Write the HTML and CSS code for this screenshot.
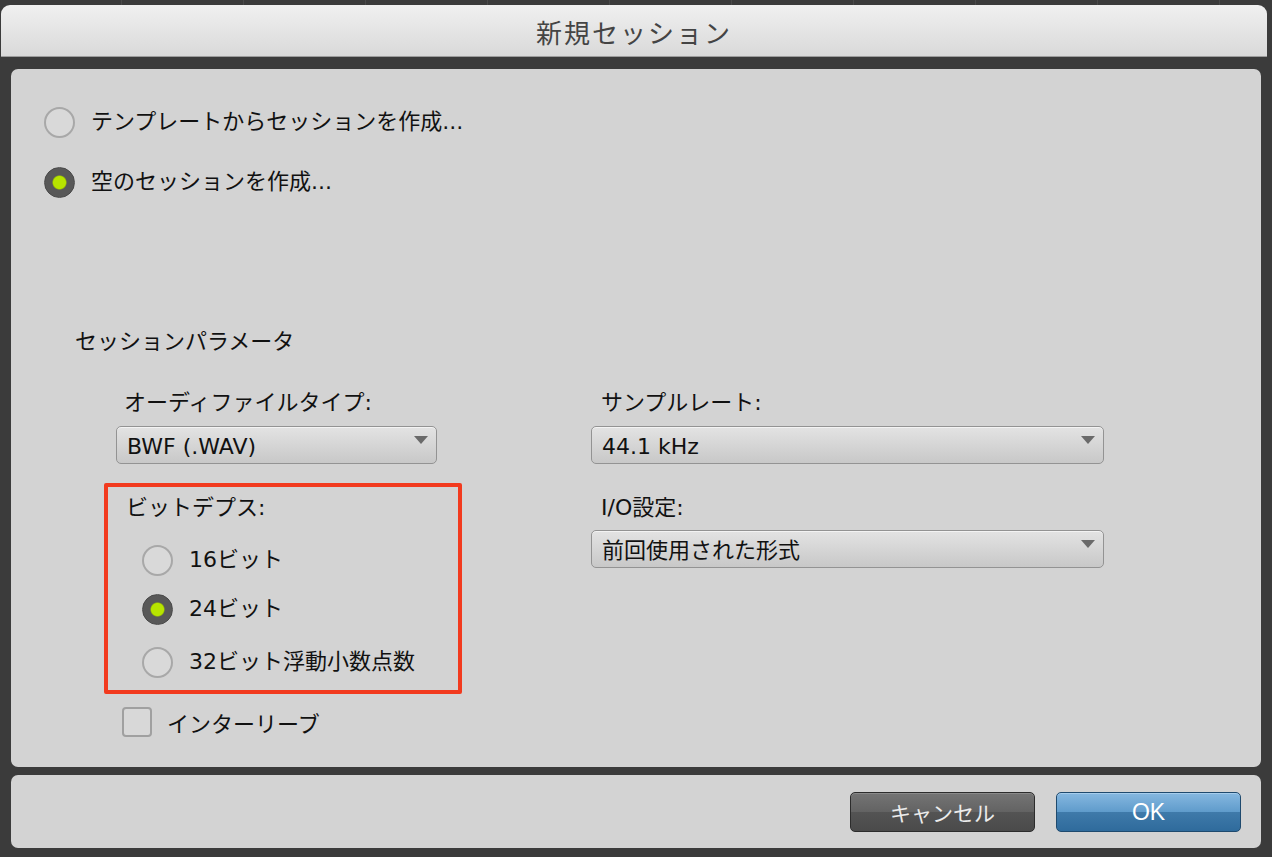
FILE: index.html
```html
<!DOCTYPE html>
<html lang="ja">
<head>
    <meta charset="UTF-8">
    <meta name="viewport" content="width=device-width, initial-scale=1.0">
    <title>新規セッション</title>
    <link rel="stylesheet" href="styles.css">
</head>
<body>

    <div class="top-strip"></div>

    <div class="window">
        <div class="titlebar">新規セッション</div>

        <div class="content">
            <div class="panel main">
                <div class="option">
                    <span class="radio"></span>
                    <span>テンプレートからセッションを作成...</span>
                </div>
                <div class="option second">
                    <span class="radio checked"></span>
                    <span>空のセッションを作成...</span>
                </div>

                <div class="section-title">セッションパラメータ</div>

                <div class="params">
                    <div class="col-left">
                        <div class="label">オーディファイルタイプ:</div>
                        <div class="select">BWF (.WAV)</div>

                        <div class="bit-depth">
                            <div class="label">ビットデプス:</div>
                            <div class="option small">
                                <span class="radio"></span>
                                <span>16ビット</span>
                            </div>
                            <div class="option small">
                                <span class="radio checked"></span>
                                <span>24ビット</span>
                            </div>
                            <div class="option small">
                                <span class="radio"></span>
                                <span>32ビット浮動小数点数</span>
                            </div>
                        </div>

                        <div class="check-row">
                            <span class="checkbox"></span>
                            <span>インターリーブ</span>
                        </div>
                    </div>

                    <div class="col-right">
                        <div class="label">サンプルレート:</div>
                        <div class="select">44.1 kHz</div>
                        <div class="label io">I/O設定:</div>
                        <div class="select">前回使用された形式</div>
                    </div>
                </div>
            </div>

            <div class="panel footer">
                <button class="btn cancel">キャンセル</button>
                <button class="btn ok">OK</button>
            </div>
        </div>
    </div>

</body>
</html>
```

FILE: styles.css
```css
* {
    margin: 0;
    padding: 0;
    box-sizing: border-box;
}

body {
    font-family: 'DejaVu Sans', 'Noto Sans CJK JP', sans-serif;
    font-size: 22px;
    color: #111;
    background-color: #3b3b3b;
    width: 1272px;
    height: 857px;
    overflow: hidden;
}

.top-strip {
    height: 5px;
    background: repeating-linear-gradient(90deg, #3b3b3b 0 121px, #4a4a4a 121px 122px);
}

.titlebar {
    height: 52px;
    margin: 0 5px 0 1px;
    border-radius: 9px 9px 0 0;
    background: linear-gradient(#f0f0f0, #d9d9d9);
    border-bottom: 1px solid #9c9c9c;
    text-align: center;
    line-height: 54px;
    font-family: 'Noto Sans CJK JP', sans-serif;
    font-size: 26px;
    letter-spacing: 2px;
    color: #444;
}

.content {
    padding: 12px 11px 9px 11px;
    display: flex;
    flex-direction: column;
    gap: 8px;
}

.panel {
    background-color: #d3d3d3;
    border-radius: 7px;
}

.main {
    height: 698px;
    padding: 37px 0 0 33px;
}

.option {
    display: flex;
    align-items: center;
    height: 32px;
    gap: 16px;
    line-height: 32px;
}

.option.second {
    margin-top: 28px;
}

.radio {
    width: 31px;
    height: 31px;
    border-radius: 50%;
    border: 2px solid #a8a8a8;
    background-color: #d9d9d9;
    flex-shrink: 0;
}

.radio.checked {
    border: 1px solid #4a4a4a;
    background: radial-gradient(circle, #b7e400 0 6px, #a0c800 6.5px, #585858 7.5px);
}

.section-title {
    margin: 126px 0 0 31px;
    line-height: 36px;
}

.params {
    display: flex;
    gap: 129px;
    margin: 25px 0 0 60px;
}

.col-left {
    width: 358px;
}

.col-right {
    width: 513px;
}

.label {
    line-height: 36px;
    padding-left: 20px;
}

.col-right .label {
    padding-left: 10px;
}

.label.io {
    margin-top: 26px;
}

.select {
    position: relative;
    height: 38px;
    margin-top: 5px;
    padding: 2px 0 0 10px;
    line-height: 36px;
    border: 1px solid #939393;
    border-radius: 5px;
    background: linear-gradient(#e3e3e3, #c8c8c8);
    box-shadow: inset 0 1px 0 #f3f3f3;
}

.col-left > .select {
    width: 321px;
    margin-left: 12px;
}

.col-right .io + .select {
    margin-top: 4px;
}

.select::after {
    content: '';
    position: absolute;
    right: 8px;
    top: 9px;
    border-left: 7px solid transparent;
    border-right: 7px solid transparent;
    border-top: 8px solid #6a6a6a;
}

.bit-depth {
    margin-top: 19px;
    height: 211px;
    border: 4px solid #f23a1e;
    border-radius: 2px;
}

.bit-depth .label {
    margin-top: 6px;
    line-height: 30px;
    padding-left: 18px;
}

.option.small {
    margin: 17px 0 0 34px;
}

.option.small:nth-child(2),
.option.small:nth-child(4) {
    margin-top: 21px;
}

.check-row {
    display: flex;
    align-items: center;
    gap: 15px;
    height: 30px;
    margin: 13px 0 0 18px;
}

.checkbox {
    width: 30px;
    height: 30px;
    border: 2px solid #a0a0a0;
    border-radius: 4px;
    background-color: #d8d8d8;
}

.footer {
    height: 73px;
    display: flex;
    justify-content: flex-end;
    align-items: center;
    gap: 21px;
    padding: 1px 20px 0 0;
}

.btn {
    width: 185px;
    height: 40px;
    border-radius: 5px;
    font-family: 'Noto Sans CJK JP', sans-serif;
    font-size: 21px;
    line-height: 36px;
}

.cancel {
    color: #ececec;
    border: 1px solid #2c2c2c;
    background: linear-gradient(#747474, #636363 50%, #545454 50%, #4a4a4a);
    box-shadow: inset 0 1px 0 #8a8a8a;
}

.ok {
    color: #ffffff;
    font-family: 'Liberation Sans', sans-serif;
    font-size: 23px;
    border: 1px solid #1f4a6e;
    background: linear-gradient(#86b8e0, #5f9bcb 50%, #3f7aaa 50%, #2f6b9c);
    box-shadow: inset 0 1px 0 #a6cdec;
}
```
